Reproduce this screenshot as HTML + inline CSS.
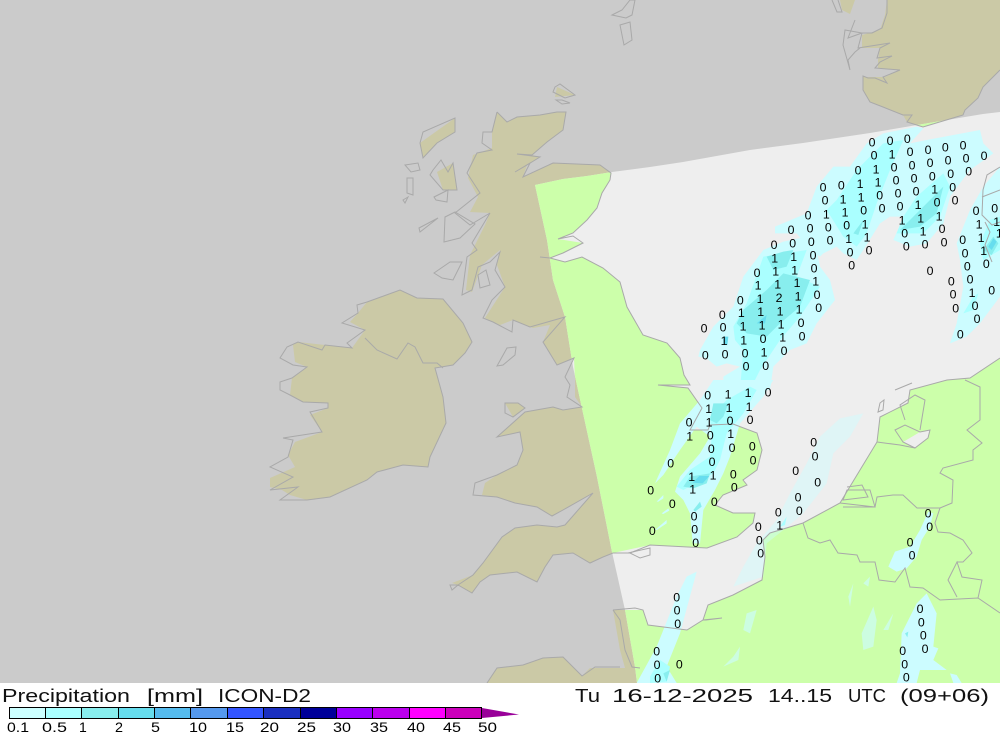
<!DOCTYPE html>
<html><head><meta charset="utf-8"><title>Precipitation</title>
<style>
html,body{margin:0;padding:0;background:#fff;width:1000px;height:733px;overflow:hidden}
svg{display:block}
text{font-family:"Liberation Sans",sans-serif;fill:#000}
.c{fill:none;stroke:#a9a9a9;stroke-width:1}
.d text{font-size:37px;text-anchor:middle}
.t text{font-size:18px;fill:#111}
</style></head><body>
<svg width="1000" height="733" viewBox="0 0 1000 733" xmlns="http://www.w3.org/2000/svg">
<defs>
<clipPath id="dom"><polygon points="535,185 563,179 587,176 612,172 650,167 683,162 750,150 803,143 870,133 917,125 983,114 1000,112 1000,683 637,683 635,667 625,610 612,552 597,477 583,413 573,367 565,317 553,280 547,240"/></clipPath>
<clipPath id="map"><rect width="1000" height="683"/></clipPath>
<g id="land">
<polygon points="497,112 507,122 517,117 540,115 557,112 566,112 563,130 547,142 532,155 540,157 527,165 523,177 553,163 600,165 611,173 610,180 602,193 597,208 587,220 573,233 558,239 583,243 563,253 550,258 565,262 582,257 603,268 620,282 627,307 643,335 667,343 680,358 684,375 690,385 658,385 688,388 702,408 690,430 708,430 710,425 733,424 757,433 762,450 757,470 743,480 747,485 723,495 715,505 733,513 755,513 753,523 737,537 707,548 650,545 613,553 603,557 590,563 573,553 553,555 545,567 537,582 517,572 490,575 480,582 472,593 458,585 452,583 473,575 483,563 502,537 515,528 537,525 557,527 565,525 593,493 563,510 552,516 537,507 515,503 497,497 482,495 485,483 497,475 517,465 523,450 520,432 497,437 525,412 553,407 563,410 582,407 575,397 575,380 574,358 557,365 543,342 550,325 533,328 513,320 500,325 485,318 505,287 497,265 500,250 482,265 472,292 466,290 470,255 485,225 490,213 470,212 478,197 468,178 473,155 492,148 492,132"/>
<polygon points="367,302 400,290 417,298 443,299 463,323 472,342 465,353 453,365 435,368 443,397 446,423 430,457 428,467 403,465 377,472 367,480 330,497 307,500 290,495 282,490 270,487 270,478 295,467 288,455 295,442 322,432 310,415 328,408 328,403 303,402 290,395 292,378 307,367 295,362 293,345 298,342 325,345 352,348 365,330 350,322 358,313"/>
<polygon points="437,172 453,163 457,190 443,190"/>
<polygon points="420,143 455,118 455,132 437,143 423,158"/>
<polygon points="557,87 575,95 555,97"/>
<polygon points="505,403 518,403 525,408 513,417"/>
<polygon points="887,0 1000,0 1000,70 983,87 978,98 965,110 963,115 953,118 923,127 907,122 903,115 883,107 870,102 863,90 863,77 885,77 900,70 878,68 878,60 880,48 862,48 862,35 880,30 885,15"/>
<polygon points="840,0 855,0 850,14 842,10"/>
<polygon points="1000,358 970,378 947,380 910,390 908,403 880,417 877,442 860,470 840,503 803,523 770,533 763,540 765,557 762,580 733,595 708,605 703,620 687,630 648,625 643,610 613,610 620,650 625,668 590,668 582,676 563,657 543,658 523,665 497,668 487,683 1000,683"/>
<polygon points="1000,170 994,175 990,185 1000,184"/>
</g>
</defs>
<g clip-path="url(#map)">
<rect width="1000" height="683" fill="#cbcbcb"/>
<use href="#land" fill="#cbc9a6"/>
<g clip-path="url(#dom)">
<rect width="1000" height="683" fill="#eeeeee"/>
<use href="#land" fill="#ccffaa"/>
<polygon points="903,442 920,432 930,430 928,438 915,448" fill="#eeeeee"/>

<!-- precipitation: north sea -->
<g transform="translate(650 110) scale(.33333)">
<g fill="#ccfcff">
<polygon points="145,740 150,720 190,650 250,590 280,500 340,420 400,395 470,380 500,420 510,470 540,510 555,570 500,640 470,700 420,720 370,770 360,840 220,840 220,800 270,770 230,760 200,770 170,745"/>
<polygon points="375,350 470,310 500,230 550,170 600,170 650,100 700,70 800,50 820,55 780,100 830,90 990,60 1000,100 1030,130 960,180 900,260 880,340 830,400 780,410 730,390 760,320 720,320 690,340 640,420 620,450 580,430 560,410 520,430 510,440 480,420 440,370 375,370"/>
<polygon points="920,400 960,300 1000,230 1050,170 1050,560 990,640 950,680 900,700 920,640 940,530 930,450"/>
</g>
<g fill="#aaffff">
<polygon points="250,650 290,580 340,440 470,420 440,500 510,530 450,620 390,690 330,780 300,840 270,840 280,720 255,690"/>
<polygon points="580,380 530,300 560,270 620,180 700,100 760,90 720,180 680,280 650,370 620,410"/>
<polygon points="740,370 760,320 800,260 880,190 900,230 870,320 820,370"/>
<polygon points="990,400 1020,330 1050,320 1050,420 1000,450"/>
<polygon points="940,610 970,560 985,550 970,600"/>
</g>
<g fill="#88eeee">
<polygon points="260,640 280,600 350,540 400,490 480,510 450,590 390,640 350,680 290,670"/>
<polygon points="350,440 400,425 430,420 410,470 370,480"/>
<polygon points="750,360 790,320 830,280 880,230 860,310 810,350"/>
<polygon points="610,370 640,330 625,375"/>
<polygon points="1000,420 1030,380 1045,400 1025,435"/>
</g>
<g fill="#66ddee">
<polygon points="320,640 350,615 345,640"/>
<polygon points="220,680 235,680 232,705 220,700"/>
<polygon points="1015,410 1030,385 1040,395 1025,420"/>
</g>
</g>
<!-- precipitation: south -->
<g transform="translate(600 380) scale(.33333)">
<polygon points="400,620 430,560 470,490 530,420 570,340 620,250 660,170 720,115 790,100 750,170 700,220 680,310 610,400 550,450 500,490 490,590" fill="#ccfcff" opacity=".45"/>
<g fill="#ccfcff">
<polygon points="165,310 210,210 240,130 300,60 340,0 520,0 490,50 420,130 390,230 370,280 345,330 310,390 300,490 278,490 270,400 250,360 225,335 240,290 300,220 330,170 290,140 240,210 190,285"/>
<polygon points="170,365 190,345 190,355 175,365"/>
<polygon points="165,450 200,420 200,430 170,450"/>
<polygon points="185,400 205,385 208,392 190,402"/>
<polygon points="110,909 170,800 230,650 260,590 290,575 240,760 200,860 230,909"/>
<polygon points="900,880 905,760 950,670 980,640 1010,700 1000,800 1015,805 1000,840 1040,870 960,870 950,909 890,909"/>
<polygon points="865,560 885,515 930,500 960,450 985,395 1000,400 990,440 965,480 950,530 920,565 890,575"/>
<g opacity=".65">
<polygon points="785,760 820,680 830,720 820,800 790,810"/>
<polygon points="745,650 760,610 750,680"/>
<polygon points="790,610 810,590 805,620"/>
<polygon points="400,830 420,800 415,840 370,860"/>
<polygon points="430,750 440,700 470,690 450,760"/>
<polygon points="850,750 880,700 865,750"/>
</g>
<polygon points="1050,880 1070,885 1085,909 1060,909"/>
</g>
<g fill="#aaffff">
<polygon points="330,110 380,60 450,20 470,30 430,100 380,160 360,240 340,280 250,330 230,320 270,270 330,230 335,170"/>
<polygon points="540,440 560,410 555,435"/>
<polygon points="150,890 180,840 210,860 200,905 150,909"/>
</g>
<g fill="#88eeee">
<polygon points="330,120 340,70 385,70 370,110 350,130"/>
<polygon points="250,320 270,290 330,280 320,310 280,325"/>
<polygon points="280,390 300,365 305,380 285,395"/>
<polygon points="190,880 210,870 200,905"/>
<polygon points="915,760 925,755 922,772"/>
</g>
<polygon points="278,308 298,288 328,288 308,310" fill="#66ddee"/>
</g>
</g>

<!-- coastlines -->
<g class="c">
<polyline points="497,112 507,122 517,117 540,115 557,112 566,112 563,130 547,142 532,155 517,154 540,157 527,165 515,172 530,163 523,177 553,163 600,165 611,173 610,180 602,193 597,208 587,220 573,233 558,239 573,236 583,243 563,253 550,258 540,257 550,258 565,262 582,257 603,268 620,282 627,307 643,335 667,343 680,358 684,375 690,385 658,385 688,388 702,408 690,430 708,430 710,425 733,424 757,433 762,450 757,470 743,480 747,485 723,495 715,505 733,513 755,513 753,523 737,537 707,548 650,545 630,553 613,553 603,557 590,563 573,553 553,555 545,567 537,582 517,572 490,575 480,582 472,593 458,585 450,585 452,590 458,585 473,575 483,563 502,537 515,528 537,525 557,527 565,525 593,493 563,510 552,516 537,507 515,503 497,497 473,495 475,483 497,475 517,465 523,450 520,432 497,437 525,412 553,407 563,410 582,407 567,397 570,385 565,377 574,358 557,365 543,342 565,317 530,327 513,320 512,332 493,322 483,318 492,300 505,287 495,270 500,252 490,262 478,267 472,290 462,295 467,257 477,250 472,243 490,213 470,225 455,213 480,193 467,173 477,153 492,150 482,143 483,132 492,132 497,112"/>
<polygon points="367,302 357,305 358,313 342,323 365,330 347,343 352,348 325,345 322,350 298,342 287,347 280,358 293,365 307,367 292,378 280,382 280,390 290,395 303,402 328,403 328,408 310,412 322,432 283,438 293,440 288,457 270,467 293,477 270,490 298,487 280,500 307,500 330,497 367,480 377,472 403,465 428,467 430,457 446,423 443,397 435,368 453,365 465,353 472,342 463,323 443,299 417,298 400,290"/>
<polyline points="365,338 377,350 397,359 408,343 415,347 423,363 437,363 443,368"/>
<polygon points="497,366 507,348 516,347 515,355 503,365"/>
<polygon points="505,403 518,403 525,408 513,417 505,413"/>
<polygon points="433,170 441,160 448,172 453,163 457,190 450,190 443,190 430,175"/>
<polygon points="420,143 423,132 455,118 455,132 437,143 423,158"/>
<polygon points="405,165 418,163 420,170 411,172"/>
<polygon points="407,178 413,178 413,195 407,193"/>
<polygon points="403,200 408,197 405,203"/>
<polygon points="434,197 448,190 447,202 436,200"/>
<polygon points="419,228 438,218 420,232"/>
<polygon points="445,217 455,212 475,224 460,238 444,242"/>
<polygon points="434,273 450,262 462,262 453,280 442,278"/>
<polygon points="478,275 486,270 490,285 480,288"/>
<polygon points="555,87 560,84 575,95 565,98 553,92"/>
<polygon points="556,100 562,100 570,103 562,104"/>
<polygon points="612,15 622,10 630,0 635,0 632,15 626,18"/>
<polygon points="620,25 630,22 632,40 624,45"/>
<polyline points="832,0 837,12 842,12 838,0"/>
<polyline points="887,0 887,13 882,28 872,33 862,33 858,48 890,43 880,48 877,58 892,56 880,62 875,68 900,70 883,77 887,83 875,78 868,78 863,76 863,90 870,102 883,107 903,115 912,115 907,122 923,127 953,118 963,115 965,110 978,98 983,87 1000,70"/>
<polyline points="855,20 848,38 862,33 845,30 843,45 850,70 848,60 855,52 860,48"/>
<polyline points="1000,358 970,378 947,380 910,390 908,403 880,417 877,442 860,470 840,503 803,523 770,533 763,540 765,557 762,580 733,595 708,605 703,620 706,620 722,618 703,620 687,630 648,625 643,610 635,608 613,610"/>
<polyline points="613,610 620,620 625,650 632,667 640,668"/>
<polyline points="487,683 497,668 523,665 543,658 563,657 582,676 595,667 620,667"/>
<polyline points="628,553 650,548 650,555 640,558 630,553"/>
<polygon points="880,403 884,400 883,410 878,412"/>
<polyline points="895,390 912,383"/>
<polygon points="895,430 905,425 920,432 930,430 928,438 915,448 903,442"/>
<polyline points="877,442 900,445 915,448"/>
<polyline points="803,523 808,538 820,543 830,540 838,553 857,555 860,562 875,562 879,580 895,582 905,568 910,587 923,588 940,600 978,598 1000,613"/>
<polyline points="978,598 982,580 962,577 957,562 948,580 957,597"/>
<polyline points="957,562 963,562 972,553 963,540 950,533 938,532 935,523 940,508 917,508 903,495 893,495 877,497 875,507 843,507"/>
<polyline points="940,508 952,503 953,480 940,473 943,468 973,460 973,450 982,443 967,430 980,420 980,387 965,380"/>
<polyline points="840,503 875,507 870,490 847,490 843,500 868,497 862,485 847,487"/>
<polyline points="905,420 900,405 915,395 925,400 920,430"/>
<polyline points="1000,167 987,175 983,190 982,215 992,225 1000,222"/>
<polyline points="985,222 990,232 985,245 992,262"/>
<polyline points="982,197 1000,190"/>
</g>

<!-- values -->
<g class="d" transform="translate(650 110.7) scale(.33333)">
<text x="666 720 772 672 780 834 886 939 624 732 786 840 894 948 1002 519 574 738 792 847 902 956 525 689 744 798 908 474 641 696 750 861 915 423 480 535 590 978 1034 372 428 484 540 764 876 489 600 657 769 825 882 938 321 492 605 840 945 952 1009 271 501 904 960 217 506 909 1025 162 219 453 917 975 339 456 981 166 225 285 402 931 288 347" y="108 103 97 147 136 130 123 116 192 182 176 169 162 156 148 242 237 221 215 209 202 195 282 267 261 255 242 327 312 306 300 288 281 370 366 362 357 313 306 415 411 406 402 381 367 446 437 431 420 413 407 400 499 486 476 493 440 479 472 581 565 525 519 625 604 564 552 666 663 649 605 598 697 690 637 747 743 740 733 684 780 778">0000000000000000000000000000000000000000000000000000000000000000000000000000000000</text>
<text x="726 678 630 684 579 633 854 529 585 804 645 756 812 867 596 651 819 987 1040 374 431 993 1048 377 434 1001 324 383 441 497 330 444 274 332 390 447 966 279 336 393 222 281 398 342" y="143 188 232 227 278 273 248 324 318 295 353 341 335 329 397 392 375 354 346 455 451 394 381 495 491 433 537 533 529 525 577 570 619 616 614 609 559 659 657 654 703 701 693 737">11111111111111111111111111111111111111111111</text>
<text x="387" y="574">2</text>
</g>
<g class="d" transform="translate(600 380.7) scale(.33333)">
<text x="323 504 267 390 450 331 334 396 457 641 212 336 459 645 587 400 653 152 403 594 217 343 535 598 984 282 157 284 475 989 287 478 930 482 936 230 231 233 960 964 970 975 170 171 238 173 908 914 919" y="56 47 138 133 130 176 217 214 210 198 261 256 251 239 283 294 318 342 333 362 382 376 407 403 411 419 463 459 451 451 499 491 497 531 537 662 702 742 697 737 777 817 825 865 863 905 823 863 903">0000000000000000000000000000000000000000000000000</text>
<text x="384 444 326 387 447 327 269 392 275 339 278 539" y="53 49 97 94 91 137 179 172 301 297 339 447">111111111111</text>
</g>
</g>

<!-- footer -->
<g class="t">
<text x="2" y="702" textLength="128" lengthAdjust="spacingAndGlyphs">Precipitation</text>
<text x="147" y="702" textLength="56" lengthAdjust="spacingAndGlyphs">[mm]</text>
<text x="218" y="702" textLength="93" lengthAdjust="spacingAndGlyphs">ICON-D2</text>
<text x="575" y="702" textLength="25" lengthAdjust="spacingAndGlyphs">Tu</text>
<text x="612" y="702" textLength="141" lengthAdjust="spacingAndGlyphs">16-12-2025</text>
<text x="768" y="702" textLength="64" lengthAdjust="spacingAndGlyphs">14..15</text>
<text x="848" y="702" textLength="38" lengthAdjust="spacingAndGlyphs">UTC</text>
<text x="900" y="702" textLength="89" lengthAdjust="spacingAndGlyphs">(09+06)</text>
</g>
<g stroke="#000" stroke-width="1">
<rect x="9.5" y="707.5" width="36" height="11" fill="#ccffff"/>
<rect x="45.5" y="707.5" width="36" height="11" fill="#aaffff"/>
<rect x="81.5" y="707.5" width="37" height="11" fill="#88eeee"/>
<rect x="118.5" y="707.5" width="36" height="11" fill="#66ddee"/>
<rect x="154.5" y="707.5" width="36" height="11" fill="#55bbee"/>
<rect x="190.5" y="707.5" width="37" height="11" fill="#5599ee"/>
<rect x="227.5" y="707.5" width="36" height="11" fill="#3355ff"/>
<rect x="263.5" y="707.5" width="37" height="11" fill="#1a2fc0"/>
<rect x="300.5" y="707.5" width="36" height="11" fill="#000099"/>
<rect x="336.5" y="707.5" width="36" height="11" fill="#9900ff"/>
<rect x="372.5" y="707.5" width="37" height="11" fill="#bb00ee"/>
<rect x="409.5" y="707.5" width="36" height="11" fill="#ff00ff"/>
<rect x="445.5" y="707.5" width="36" height="11" fill="#cc00bb"/>
</g>
<polygon points="482,708 519,714.5 482,718" fill="#990099"/>
<g font-size="14">
<text x="7" y="732" textLength="22" lengthAdjust="spacingAndGlyphs">0.1</text>
<text x="42" y="732" textLength="25" lengthAdjust="spacingAndGlyphs">0.5</text>
<text x="79" y="732">1</text>
<text x="115" y="732" textLength="8" lengthAdjust="spacingAndGlyphs">2</text>
<text x="151" y="732" textLength="9" lengthAdjust="spacingAndGlyphs">5</text>
<text x="189" y="732" textLength="18" lengthAdjust="spacingAndGlyphs">10</text>
<text x="226" y="732" textLength="18" lengthAdjust="spacingAndGlyphs">15</text>
<text x="260" y="732" textLength="19" lengthAdjust="spacingAndGlyphs">20</text>
<text x="297" y="732" textLength="19" lengthAdjust="spacingAndGlyphs">25</text>
<text x="333" y="732" textLength="18" lengthAdjust="spacingAndGlyphs">30</text>
<text x="370" y="732" textLength="18" lengthAdjust="spacingAndGlyphs">35</text>
<text x="407" y="732" textLength="18" lengthAdjust="spacingAndGlyphs">40</text>
<text x="443" y="732" textLength="18" lengthAdjust="spacingAndGlyphs">45</text>
<text x="478" y="732" textLength="19" lengthAdjust="spacingAndGlyphs">50</text>
</g>
</svg>
</body></html>
